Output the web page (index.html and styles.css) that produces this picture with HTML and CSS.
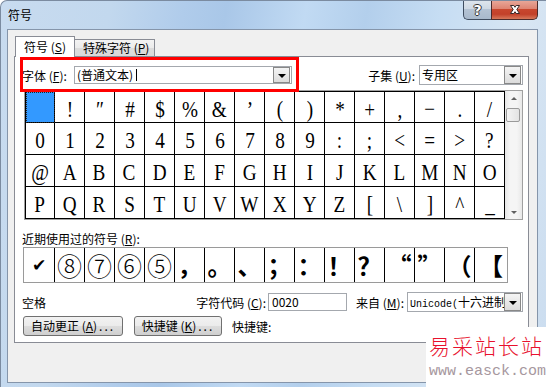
FILE: index.html
```html
<html lang="zh-CN">
<head>
    <meta charset="UTF-8">
    <title>符号</title>
    <link rel="stylesheet" href="styles.css">
</head>
<body>
    <div class="window">
        <div class="titlebar">
            <span class="title">符号</span>
            <div class="caption-buttons">
                <div class="cap-btn help"><span>?</span></div>
                <div class="cap-btn close">
                    <svg width="14" height="11" viewBox="0 0 14 11">
                        <path d="M2.5 1.5 H5.8 L7 3.3 L8.2 1.5 H11.5 L8.8 5.5 L11.5 9.5 H8.2 L7 7.7 L5.8 9.5 H2.5 L5.2 5.5 Z" fill="#fff" stroke="#3a2a2a" stroke-width="1" stroke-linejoin="round"/>
                    </svg>
                </div>
            </div>
        </div>

        <div class="client">
            <div class="tabs">
                <div class="tab active">符号 (<u>S</u>)</div>
                <div class="tab">特殊字符 (<u>P</u>)</div>
            </div>

            <div class="panel">
                <div class="highlight"></div>

                <div class="font-row">
                    <label class="font-label">字体 (<u>F</u>):</label>
                    <div class="combo font-combo">
                        <span class="combo-value">(普通文本)</span><span class="caret"></span>
                        <span class="drop"><i class="tri"></i></span>
                    </div>
                    <label class="subset-label">子集 (<u>U</u>):</label>
                    <div class="combo subset-combo">
                        <span class="combo-value">专用区</span>
                        <span class="drop"><i class="tri"></i></span>
                    </div>
                </div>

                <div class="grid-box">
                    <div class="grid">
                        <div class="cell sel"><span> </span></div>
                        <div class="cell"><span>!</span></div>
                        <div class="cell"><span>″</span></div>
                        <div class="cell"><span>#</span></div>
                        <div class="cell"><span>$</span></div>
                        <div class="cell"><span>%</span></div>
                        <div class="cell"><span>&amp;</span></div>
                        <div class="cell"><span>’</span></div>
                        <div class="cell"><span>(</span></div>
                        <div class="cell"><span>)</span></div>
                        <div class="cell"><span>*</span></div>
                        <div class="cell"><span>+</span></div>
                        <div class="cell"><span>,</span></div>
                        <div class="cell"><span>−</span></div>
                        <div class="cell"><span>.</span></div>
                        <div class="cell"><span>/</span></div>

                        <div class="cell"><span>0</span></div>
                        <div class="cell"><span>1</span></div>
                        <div class="cell"><span>2</span></div>
                        <div class="cell"><span>3</span></div>
                        <div class="cell"><span>4</span></div>
                        <div class="cell"><span>5</span></div>
                        <div class="cell"><span>6</span></div>
                        <div class="cell"><span>7</span></div>
                        <div class="cell"><span>8</span></div>
                        <div class="cell"><span>9</span></div>
                        <div class="cell"><span>:</span></div>
                        <div class="cell"><span>;</span></div>
                        <div class="cell"><span>&lt;</span></div>
                        <div class="cell"><span>=</span></div>
                        <div class="cell"><span>&gt;</span></div>
                        <div class="cell"><span>?</span></div>

                        <div class="cell"><span>@</span></div>
                        <div class="cell"><span>A</span></div>
                        <div class="cell"><span>B</span></div>
                        <div class="cell"><span>C</span></div>
                        <div class="cell"><span>D</span></div>
                        <div class="cell"><span>E</span></div>
                        <div class="cell"><span>F</span></div>
                        <div class="cell"><span>G</span></div>
                        <div class="cell"><span>H</span></div>
                        <div class="cell"><span>I</span></div>
                        <div class="cell"><span>J</span></div>
                        <div class="cell"><span>K</span></div>
                        <div class="cell"><span>L</span></div>
                        <div class="cell"><span>M</span></div>
                        <div class="cell"><span>N</span></div>
                        <div class="cell"><span>O</span></div>

                        <div class="cell"><span>P</span></div>
                        <div class="cell"><span>Q</span></div>
                        <div class="cell"><span>R</span></div>
                        <div class="cell"><span>S</span></div>
                        <div class="cell"><span>T</span></div>
                        <div class="cell"><span>U</span></div>
                        <div class="cell"><span>V</span></div>
                        <div class="cell"><span>W</span></div>
                        <div class="cell"><span>X</span></div>
                        <div class="cell"><span>Y</span></div>
                        <div class="cell"><span>Z</span></div>
                        <div class="cell"><span>[</span></div>
                        <div class="cell"><span>\</span></div>
                        <div class="cell"><span>]</span></div>
                        <div class="cell"><span>^</span></div>
                        <div class="cell"><span>_</span></div>
                    </div>
                    <div class="scrollbar">
                        <div class="sb-btn"><i class="arrow-up"></i></div>
                        <div class="thumb"></div>
                        <div class="sb-track"></div>
                        <div class="sb-btn"><i class="arrow-down"></i></div>
                    </div>
                </div>

                <div class="recent-label">近期使用过的符号 (<u>R</u>):</div>
                <div class="recent">
                    <div class="rc check">✔</div>
                    <div class="rc circ">⑧</div>
                    <div class="rc circ">⑦</div>
                    <div class="rc circ">⑥</div>
                    <div class="rc circ">⑤</div>
                    <div class="rc">，</div>
                    <div class="rc">。</div>
                    <div class="rc">、</div>
                    <div class="rc">；</div>
                    <div class="rc">：</div>
                    <div class="rc">！</div>
                    <div class="rc">？</div>
                    <div class="rc">“</div>
                    <div class="rc">”</div>
                    <div class="rc">（</div>
                    <div class="rc">【</div>
                </div>

                <div class="info-row">
                    <span class="space-name">空格</span>
                    <label class="code-label">字符代码 (<u>C</u>):</label>
                    <div class="code-input">0020</div>
                    <label class="from-label">来自 (<u>M</u>):</label>
                    <div class="combo from-combo">
                        <span class="combo-value"><span class="mono">Unicode(</span>十六进制)</span>
                        <span class="drop"><i class="tri"></i></span>
                    </div>
                </div>

                <div class="button-row">
                    <button class="btn btn-auto">自动更正 (<u>A</u>)<span class="dots">...</span></button>
                    <button class="btn btn-keys">快捷键 (<u>K</u>)<span class="dots">...</span></button>
                    <span class="keys-label">快捷键:</span>
                </div>
            </div>
        </div>

        <div class="watermark">
            <div class="wm-title">易采站长站</div>
            <div class="wm-url">www.easck.com</div>
        </div>
    </div>
</body>
</html>
```

FILE: styles.css
```css
html, body {
    margin: 0;
    padding: 0;
}

body {
    width: 546px;
    height: 387px;
    overflow: hidden;
    background: #fff;
    font-family: "Noto Sans CJK SC", sans-serif;
    font-size: 12px;
    color: #000;
}

u {
    text-decoration: underline;
}

.window {
    position: relative;
    width: 546px;
    height: 387px;
    box-sizing: border-box;
    border: 1px solid #7b8ba0;
    border-right: none;
    border-bottom: none;
    border-radius: 7px 0 0 0;
    overflow: hidden;
    background: linear-gradient(100deg, #c8dbef 0%, #c2d8ee 18%, #b0cceb 30%, #a9c7e8 37%, #c1daf3 50%, #b3cfec 60%, #c6ddf3 72%, #d8e6f3 86%, #cadcef 100%);
}

/* title bar */
.titlebar {
    display: flex;
    height: 28px;
}

.title {
    padding-left: 7px;
    line-height: 27px;
    font-size: 12px;
}

.caption-buttons {
    display: flex;
    margin-left: auto;
    margin-right: 8px;
    margin-top: -1px;
    height: 20px;
}

.cap-btn {
    box-sizing: border-box;
    height: 20px;
    display: flex;
    align-items: center;
    justify-content: center;
    border: 1px solid #3f4d60;
    border-top: none;
}

.help {
    width: 28px;
    border-right: none;
    border-radius: 0 0 0 5px;
    background: linear-gradient(#dfe6ee 0%, #cfd9e4 45%, #b4c3d4 50%, #a8b9cc 100%);
}

.help span {
    font-family: "DejaVu Sans", sans-serif;
    font-weight: bold;
    font-size: 14px;
    line-height: 14px;
    color: #fff;
    text-shadow: -1px 0 #333, 1px 0 #333, 0 -1px #333, 0 1px #333;
}

.close {
    width: 47px;
    border-color: #4a2b2b;
    border-radius: 0 0 5px 0;
    background: linear-gradient(#e9aa9c 0%, #de8573 45%, #c8472e 50%, #c2412a 75%, #d7795b 100%);
}

/* client area */
.client {
    margin-left: 6px;
    width: 531px;
    height: 354px;
    box-sizing: border-box;
    border: 1px solid #8595aa;
    background: #f0f0f0;
}

.tabs {
    display: flex;
    align-items: flex-end;
    height: 20px;
    margin: 6px 0 0 7px;
}

.tab {
    box-sizing: border-box;
    height: 17px;
    width: 80px;
    padding-left: 8px;
    line-height: 16px;
    border: 1px solid #898c95;
    border-left: none;
    border-bottom: none;
    background: linear-gradient(#f3f3f3, #ebebeb 50%, #dcdcdc 51%, #d9d9d9);
}

.tab.active {
    position: relative;
    z-index: 1;
    height: 21px;
    width: 60px;
    margin-bottom: -1px;
    line-height: 20px;
    border-left: 1px solid #898c95;
    background: #fff;
}

.panel {
    position: relative;
    margin-left: 6px;
    width: 515px;
    height: 287px;
    box-sizing: border-box;
    padding: 8px 5px 0 7px;
    border: 1px solid #898c95;
    background: #fff;
}

.highlight {
    position: absolute;
    left: 5px;
    top: 0;
    width: 279px;
    height: 35px;
    box-sizing: border-box;
    border: 3px solid #ff0000;
    z-index: 2;
}

/* font / subset row */
.font-row {
    display: flex;
    align-items: center;
    height: 20px;
}

.font-label {
    width: 52px;
}

.combo {
    display: flex;
    align-items: stretch;
    box-sizing: border-box;
    border: 1px solid #a4a8ae;
    background: #fff;
    overflow: hidden;
}

.combo-value {
    padding-left: 2px;
    line-height: 16px;
    white-space: nowrap;
    overflow: hidden;
}

.caret {
    width: 1px;
    height: 12px;
    margin: 2px 0 0 3px;
    background: #000;
}

.drop {
    flex: 0 0 auto;
    width: 17px;
    margin-left: auto;
    margin-right: 1px;
    box-sizing: border-box;
    border: 1px solid #888;
    background: linear-gradient(#f4f4f4, #dcdcdc);
    display: flex;
    align-items: center;
    justify-content: center;
}

.tri {
    width: 0;
    height: 0;
    border-left: 4px solid transparent;
    border-right: 4px solid transparent;
    border-top: 4px solid #000;
    margin-top: 1px;
}

.font-combo {
    width: 218px;
    height: 18px;
}

.subset-label {
    margin-left: auto;
    margin-right: 4px;
}

.subset-combo {
    width: 104px;
    height: 20px;
}

.subset-combo .combo-value,
.from-combo .combo-value {
    line-height: 18px;
}

/* character grid */
.grid-box {
    display: flex;
    margin: 5px 0 0 2px;
    width: 499px;
    height: 130px;
    box-sizing: border-box;
    border: 1px solid #a0a0a0;
}

.grid {
    display: grid;
    grid-template-columns: 29px repeat(15, 30px);
    grid-template-rows: 31px repeat(3, 32px);
    border-left: 1px solid #000;
    border-top: 1px solid #000;
    width: 480px;
    height: 128px;
    box-sizing: border-box;
}

.cell {
    box-sizing: border-box;
    border-right: 1px solid #000;
    border-bottom: 1px solid #000;
    text-align: center;
    overflow: hidden;
    font-family: "Liberation Serif", serif;
    font-size: 24px;
    line-height: 31px;
}

.cell span {
    display: inline-block;
    transform: translateY(2px) scaleX(0.8);
}

.cell.sel {
    background: #3399ff;
    outline: 1px dotted #222;
    outline-offset: -1px;
}

.scrollbar {
    width: 17px;
    display: flex;
    flex-direction: column;
    background: linear-gradient(90deg, #e6e6e6, #f5f5f5 30%, #f5f5f5 70%, #e8e8e8);
}

.sb-btn {
    height: 17px;
    display: flex;
    align-items: center;
    justify-content: center;
}

.arrow-up,
.arrow-down {
    width: 0;
    height: 0;
    border-left: 3px solid transparent;
    border-right: 3px solid transparent;
}

.arrow-up {
    border-bottom: 3px solid #606060;
    margin-top: -3px;
}

.arrow-down {
    border-top: 3px solid #606060;
    margin-top: 3px;
}

.thumb {
    height: 14px;
    margin: 0 2px 0 1px;
    box-sizing: border-box;
    border: 1px solid #9a9a9a;
    border-radius: 2px;
    background: linear-gradient(90deg, #f4f4f4, #e3e3e3);
}

.sb-track {
    flex: 1;
}

/* recently used */
.recent-label {
    margin-top: 11px;
    height: 16px;
    line-height: 15px;
}

.recent {
    display: grid;
    grid-template-columns: 31px repeat(14, 30px) 1fr;
    margin-left: 1px;
    width: 485px;
    height: 36px;
    box-sizing: border-box;
    border: 1px solid #9a9a9a;
}

.rc {
    border-right: 1px solid #000;
    text-align: center;
    font-size: 24px;
    font-weight: 700;
    line-height: 34px;
    overflow: hidden;
}

.rc:last-child {
    border-right: none;
}

.rc.check {
    font-family: "DejaVu Sans", sans-serif;
    font-size: 17px;
    font-weight: normal;
}

.rc.circ {
    font-size: 25px;
    font-weight: 300;
    line-height: 34px;
}

/* code row */
.info-row {
    display: flex;
    align-items: center;
    height: 20px;
    margin-top: 9px;
}

.space-name {
    width: 158px;
}

.code-label {
    width: 86px;
    margin-right: 2px;
    text-align: right;
}

.code-input {
    width: 79px;
    height: 18px;
    box-sizing: border-box;
    border: 1px solid #a4a8ae;
    padding-left: 3px;
    line-height: 16px;
}

.from-label {
    width: 57px;
    margin-right: 3px;
    text-align: right;
}

.from-combo {
    width: 116px;
    height: 20px;
}

.mono {
    font-family: "Liberation Mono", monospace;
    font-size: 10px;
}

/* buttons */
.button-row {
    display: flex;
    align-items: center;
    height: 20px;
    margin-top: 4px;
}

.btn {
    height: 20px;
    box-sizing: border-box;
    padding: 0;
    border: 1px solid #707070;
    border-radius: 3px;
    background: linear-gradient(#f2f2f2 0%, #ebebeb 50%, #dddddd 51%, #cfcfcf 100%);
    font-family: "Noto Sans CJK SC", sans-serif;
    font-size: 12px;
    line-height: 18px;
    color: #000;
}

.btn-auto {
    margin-left: 1px;
    width: 100px;
}

.btn-keys {
    margin-left: 11px;
    width: 88px;
}

.dots {
    letter-spacing: 2px;
    margin-left: 2px;
}

.keys-label {
    margin-left: 10px;
}

/* site watermark laid over the screenshot */
.watermark {
    position: absolute;
    left: 425px;
    top: 326px;
    right: 0;
    bottom: 0;
    background: #fff;
}

.wm-title {
    padding: 7px 0 0 3px;
    color: #e8112d;
    font-size: 21px;
    font-weight: 300;
    line-height: 23px;
    letter-spacing: 2px;
    white-space: nowrap;
}

.wm-url {
    margin-top: 7px;
    padding-left: 3px;
    color: #a6979e;
    font-family: "Liberation Mono", monospace;
    font-size: 15px;
    line-height: 15px;
    white-space: nowrap;
}
```
